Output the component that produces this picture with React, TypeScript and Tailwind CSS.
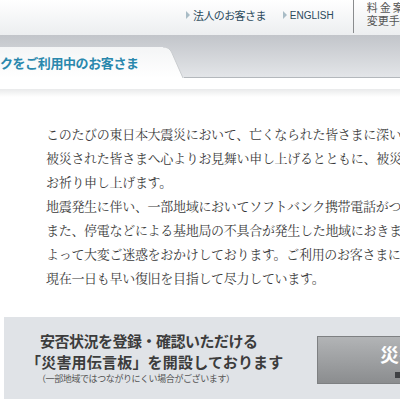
import React from "react";

const Tri = () => (
  <svg width="4" height="8" viewBox="0 0 4 8" className="mr-[3px] shrink-0">
    <path d="M0 0 L4 4 L0 8 Z" fill="#a9bcc6" />
  </svg>
);

export default function App() {
  const lines = [
    "このたびの東日本大震災において、亡くなられた皆さまに深い哀悼の意を表しますとともに、",
    "被災された皆さまへ心よりお見舞い申し上げるとともに、被災地の一日も早い復興をお祈り",
    "お祈り申し上げます。",
    "地震発生に伴い、一部地域においてソフトバンク携帯電話がつながりにくい状況となっております。",
    "また、停電などによる基地局の不具合が発生した地域におきましては、サービスの停止に",
    "よって大変ご迷惑をおかけしております。ご利用のお客さまには深くお詫び申し上げます。",
    "現在一日も早い復旧を目指して尽力しています。",
  ];
  return (
    <div className="w-[400px] h-[400px] overflow-hidden bg-white font-['Noto_Sans_CJK_JP',sans-serif]">
      {/* header */}
      <div className="h-[35px] flex overflow-hidden bg-gradient-to-b from-white to-[#eceef0]">
        <div className="shrink-0 flex items-center pl-[186px] h-[30px] text-[#2b4a5c] whitespace-nowrap">
          <Tri />
          <span className="text-[11px] tracking-[-0.6px]">法人のお客さま</span>
          <span className="w-[17px]" />
          <Tri />
          <span className="font-['Liberation_Sans',sans-serif] text-[10px]">ENGLISH</span>
        </div>
        <div className="shrink-0 ml-[19px] w-px h-[33px] bg-[#8a8c8e]" />
        <div className="shrink-0 pl-[13px] pt-[1px] text-[11px] leading-[13px] text-[#555] whitespace-nowrap">
          <div className="tracking-[2px]">料金案内</div>
          <div>変更手続き</div>
        </div>
      </div>
      {/* tab band */}
      <div className="h-[43px] flex items-end bg-gradient-to-b from-[#c2c5ca] to-[#e4e6e9]">
        <div className="h-[31px] flex shrink-0">
          <div className="w-[163px] bg-gradient-to-b from-[#f4f5f6] to-white flex items-center">
            <span className="text-[13px] font-bold text-[#2a88ad] whitespace-nowrap tracking-[-0.4px]">
              クをご利用中のお客さま
            </span>
          </div>
          <svg width="21" height="31" viewBox="0 0 21 31">
            <defs>
              <linearGradient id="tg" x1="0" y1="0" x2="0" y2="1">
                <stop offset="0" stopColor="#f4f5f6" />
                <stop offset="1" stopColor="#ffffff" />
              </linearGradient>
            </defs>
            <path d="M0 0 Q6 0 8.5 5 L20 31 L0 31 Z" fill="url(#tg)" />
            <path d="M0 0 Q6 0 8.5 5 L20 31" fill="none" stroke="#c9cccf" strokeWidth="1" />
          </svg>
        </div>
        <div className="flex-1 h-full border-b border-[#b4b8bc]" />
      </div>
      <div className="h-[11px] bg-white" />
      <div className="h-[8px] bg-gradient-to-b from-[#e9eaeb] to-white" />
      {/* body */}
      <div className="pl-[46px] pt-[25px] text-[13px] leading-[24px] tracking-[-0.3px] text-[#3a3a3a] font-['Noto_Serif_CJK_JP','Noto_Sans_CJK_JP',serif] whitespace-nowrap overflow-hidden">
        {lines.map((l, i) => (
          <div key={i}>{l}</div>
        ))}
      </div>
      {/* bottom box */}
      <div className="mt-[27px] ml-[4px] h-[82px] bg-[#e0e3e7] flex overflow-hidden">
        <div className="shrink-0 w-[313px] pl-[36px] pt-[13px] text-[#3c3c3c] whitespace-nowrap">
          <div className="text-[15px] font-bold leading-[21px] tracking-[-0.5px]">安否状況を登録・確認いただける</div>
          <div className="text-[15px] font-bold leading-[21px] -ml-[14px] tracking-[0.2px]">「災害用伝言板」を開設しております</div>
          <div className="text-[9px] leading-[14px] text-[#555] -ml-[3px] tracking-[-0.4px]">（一部地域ではつながりにくい場合がございます）</div>
        </div>
        <div className="shrink-0 mt-[19px] h-[48px] w-[100px] border border-[#7e8082] bg-gradient-to-b from-[#b2b4b6] to-[#8b8d8f] flex flex-col pl-[62px] pt-[5px] overflow-hidden">
          <span className="text-[19px] font-bold text-white leading-[24px] whitespace-nowrap">災害用伝言板</span>
          <span className="ml-[15px] mt-[6px] w-[6px] h-[6px] bg-[#3f4144]" />
        </div>
      </div>
    </div>
  );
}
